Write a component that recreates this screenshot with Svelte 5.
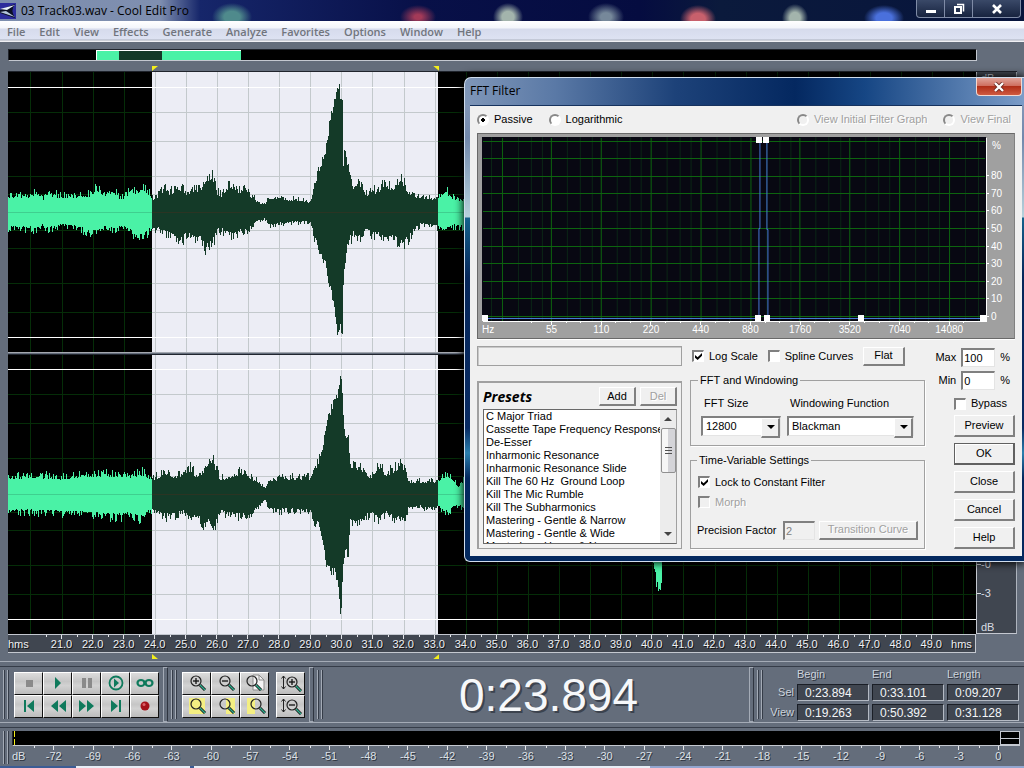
<script lang="ts">
	const menus = ['File', 'Edit', 'View', 'Effects', 'Generate', 'Analyze', 'Favorites', 'Options', 'Window', 'Help'];

	// Visible range and selection, in seconds
	const view = { begin: 19.263, end: 50.392 };
	const sel = { begin: 23.894, end: 33.101 };
	const W = 968;
	const H = 562;

	const toX = (t: number) => ((t - view.begin) / (view.end - view.begin)) * W;
	const pct = (t: number) => (toX(t) / W) * 100;
	const selX = Math.round(toX(sel.begin));
	const selEnd = Math.round(toX(sel.end));

	const seconds = Array.from({ length: 31 }, (_, i) => 20 + i);
	const timeLabels = Array.from({ length: 29 }, (_, i) => (21 + i).toFixed(1));
	const levels = [18, 36, 71, 100];
	const dbLabels = Array.from({ length: 25 }, (_, i) => String(-72 + i * 3));

	// Envelope key points: x, peak above the centre, peak below it
	const left = [
		[0, 17, 15], [22, 17, 16], [28, 20, 17], [34, 13, 13], [38, 20, 17], [52, 16, 13], [67, 16, 14],
		[82, 18, 20], [89, 24, 20], [97, 17, 15], [104, 22, 17], [112, 15, 15], [118, 17, 16], [123, 26, 20],
		[127, 20, 26], [135, 26, 25], [142, 18, 17], [146, 13, 15], [155, 24, 20], [162, 20, 22], [170, 26, 30],
		[178, 20, 22], [187, 25, 28], [192, 22, 25], [197, 34, 35], [204, 36, 30], [209, 20, 18], [214, 16, 18],
		[218, 26, 21], [224, 27, 23], [230, 22, 20], [239, 22, 18], [244, 15, 13], [250, 10, 8], [256, 8, 6],
		[262, 15, 13], [272, 15, 11], [282, 13, 10], [292, 13, 10], [302, 10, 10], [304, 20, 18], [310, 40, 38],
		[317, 62, 52], [322, 92, 74], [326, 112, 98], [329, 126, 122], [331, 126, 120], [332, 115, 112],
		[334, 115, 122], [335, 50, 70], [337, 65, 50], [340, 42, 28], [345, 25, 22], [349, 30, 28], [353, 28, 22],
		[358, 18, 18], [364, 20, 22], [372, 25, 22], [376, 30, 28], [384, 24, 24], [392, 33, 31], [396, 28, 31],
		[402, 18, 22], [412, 15, 12], [422, 14, 13], [430, 16, 15], [435, 16, 19], [438, 21, 16], [444, 15, 13],
		[456, 12, 15], [968, 12, 12]
	];
	const right = [
		[0, 17, 17], [22, 19, 17], [52, 17, 18], [82, 20, 20], [112, 20, 22], [122, 18, 20], [132, 22, 24],
		[142, 18, 16], [145, 16, 17], [157, 23, 22], [167, 18, 20], [175, 22, 18], [182, 26, 25], [189, 18, 22],
		[196, 25, 30], [200, 34, 28], [205, 36, 38], [208, 24, 26], [212, 16, 18], [222, 18, 20], [230, 22, 22],
		[242, 18, 20], [248, 14, 14], [254, 8, 8], [257, 7, 5], [260, 14, 15], [272, 17, 16], [287, 17, 15],
		[302, 17, 16], [305, 27, 27], [310, 31, 31], [314, 48, 48], [319, 70, 72], [323, 87, 78], [326, 88, 74],
		[330, 104, 94], [332, 118, 120], [333, 113, 114], [334, 105, 88], [336, 60, 57], [340, 56, 56],
		[342, 30, 28], [349, 28, 30], [355, 25, 25], [362, 18, 18], [370, 29, 26], [378, 21, 19], [386, 25, 24],
		[392, 29, 25], [397, 24, 28], [400, 13, 14], [412, 13, 12], [424, 13, 15], [430, 14, 12], [435, 18, 15],
		[439, 21, 19], [444, 16, 14], [450, 8, 10], [456, 15, 15], [640, 12, 12], [645, 40, 72], [648, 60, 86],
		[651, 60, 98], [653, 50, 92], [654, 12, 12], [968, 12, 12]
	];

	// Small repeatable noise, so that a redraw gives the same shape
	function noise(n: number) {
		const s = Math.sin(n * 127.1 + 11.7) * 43758.5453;
		return s - Math.floor(s);
	}

	function peak(points: number[][], x: number, side: number) {
		let i = 1;
		while (i < points.length - 1 && points[i][0] <= x) i++;
		const a = points[i - 1];
		const b = points[i];
		const v = a[side] + ((b[side] - a[side]) * (x - a[0])) / (b[0] - a[0]);
		const n = noise(x * 2.3 + side * 91 + points.length);
		const spread = Math.min(v * 0.24, 6);
		return Math.round(v - spread / 1.5 + n * n * spread * 1.8);
	}

	function wave(points: number[][], mid: number, from: number, to: number) {
		let top = `M${from} ${mid}`;
		let bottom = '';
		for (let x = from; x < to; x++) top += `V${mid - peak(points, x, 1)}h1`;
		for (let x = to - 1; x >= from; x--) bottom += `V${mid + 1 + peak(points, x, 2)}h-1`;
		return top + bottom + 'Z';
	}

	const channels = [
		{ mid: 140, points: left },
		{ mid: 422, points: right }
	];

	// Filter graph
	const freqs = ['55', '110', '220', '440', '880', '1760', '3520', '7040', '14080'];
	const octaves = Array.from({ length: 10 }, (_, i) => 20 + i * 49.8);
	const minors = octaves.flatMap((o) => [1.25, 1.5, 1.75].map((r) => o + 49.8 * Math.log2(r))).filter((x) => x < 505);
	const rows = Array.from({ length: 11 }, (_, i) => 4 + i * 17.5);
	const percents = [80, 70, 60, 50, 40, 30, 20, 10, 0];
	const nodes = [[3, 181], [277, 181], [286, 181], [380, 181], [502, 181], [278, 3], [285, 3]];

	const presets = [
		'C Major Triad',
		'Cassette Tape Frequency Response',
		'De-Esser',
		'Inharmonic Resonance',
		'Inharmonic Resonance Slide',
		'Kill The 60 Hz\u00a0 Ground Loop',
		'Kill The Mic Rumble',
		'Kill The Subharmonics',
		'Mastering - Gentle & Narrow',
		'Mastering - Gentle & Wide',
		'Mastering - Heavy & Narrow'
	];

	const transport = ['stop', 'play', 'pause', 'play-loop', 'loop', 'start', 'rewind', 'forward', 'end', 'record'];
	const zooms = ['in', 'out', 'full', 'selection', 'right-edge', 'left-edge'];

	const times = [
		{ name: 'Sel', values: ['0:23.894', '0:33.101', '0:09.207'] },
		{ name: 'View', values: ['0:19.263', '0:50.392', '0:31.128'] }
	];

	const snap = (v: number) => Math.floor(v) + 0.5;

	let mode = $state('passive');
	let logScale = $state(true);
	let spline = $state(false);
	let lock = $state(true);
	let bypass = $state(false);
</script>

{#snippet lens(cx: number, cy: number, sign: string)}
	<path d="M{cx + 4} {cy + 4}l5 5" stroke="#111" stroke-width="3" />
	<path d="M{cx + 4} {cy + 4}l5 5" stroke="#2fae8e" stroke-width="1.4" />
	<circle {cx} {cy} r="5" fill="none" stroke="#222" stroke-width="1.2" />
	{#if sign}<path d="M{cx - 3} {cy}h6" stroke="#111" stroke-width="1.3" />{/if}
	{#if sign === '+'}<path d="M{cx} {cy - 3}v6" stroke="#111" stroke-width="1.3" />{/if}
{/snippet}

<div class="app">
	<header class="titlebar">
		<svg class="logo" width="16" height="16" viewBox="0 0 16 16" aria-hidden="true">
			<path d="M0 0h16v16H0z" fill="#2c2c9c" />
			<path d="M0 7L15 1Q10 7 15 15L0 10z" fill="#0c1024" />
			<path d="M0 6L15 2L7 7z" fill="#e8f2fa" />
			<path d="M0 9L6 8L15 14z" fill="#b4c6dc" />
		</svg>
		<span class="title">03 Track03.wav - Cool Edit Pro</span>
		<div class="win-buttons">
			<button aria-label="Minimize"><svg width="12" height="12" viewBox="0 0 12 12"><path d="M1 7h10v3H1z" fill="#fff" /></svg></button>
			<button aria-label="Restore"><svg width="12" height="12" viewBox="0 0 12 12" fill="none" stroke="#fff"><path d="M4 1.5h6.500v7" stroke-width="1.500" /><path d="M2 4h6v6H2z" stroke-width="2" /></svg></button>
			<button aria-label="Close"><svg width="12" height="12" viewBox="0 0 12 12"><path d="M2 2l8 8M10 2l-8 8" stroke="#fff" stroke-width="2.600" /></svg></button>
		</div>
	</header>

	<nav class="menubar">
		{#each menus as m}
			<button>{m}</button>
		{/each}
	</nav>

	<main class="editor">
		<div class="overview">
			<div class="range"><div class="picked"></div></div>
		</div>
		<div class="markers top">
			<i class="begin" style:left="{pct(sel.begin)}%"></i>
			<i class="end" style:left="{pct(sel.end)}%"></i>
		</div>
		<div class="tracks">
			<svg class="wave" viewBox="0 0 {W} {H}" preserveAspectRatio="none" shape-rendering="crispEdges">
				<rect width={W} height={H} fill="#000" />
				<rect x={selX} width={selEnd - selX} height={H} fill="#ecedf5" />
				{#each seconds as s}
					{@const x = snap(toX(s))}
					<path d="M{x} 0V{H}" stroke={x > selX && x < selEnd ? '#c3c9cc' : '#052d08'} />
				{/each}
				{#each channels as ch}
					{#each levels as l}
						{#each [ch.mid - l, ch.mid + l] as y}
							<path d="M0 {y + 0.5}H{W}" stroke="#052d08" />
							<path d="M{selX} {y + 0.5}H{selEnd}" stroke="#c3c9cc" />
						{/each}
					{/each}
					<path d="M0 {ch.mid - 124.5}H{W}M0 {ch.mid + 125.5}H{W}" stroke="#fff" />
					<path d={wave(ch.points, ch.mid, 0, selX)} fill="#4af2a6" />
					<path d={wave(ch.points, ch.mid, selX, selEnd)} fill="#143a28" />
					<path d={wave(ch.points, ch.mid, selEnd, W)} fill="#4af2a6" />
					<path d="M0 {ch.mid + 0.5}H{W}" stroke="#3fcf8f" />
					<path d="M{selX} {ch.mid + 0.5}H{selEnd}" stroke="#2b3423" />
				{/each}
				<path d="M0 280.500H{W}" stroke="#a4a8b0" />
				<path d="M0 281.500H{W}" stroke="#646d7b" />
				<path d="M0 282.500H{W}" stroke="#20252e" />
			</svg>
			<div class="db-scale">
				<span>dB</span>
				<span class="tick push">-0</span>
				<span class="tick">-3</span>
				<span class="last">dB</span>
			</div>
		</div>
		<div class="ruler">
			<span class="unit">hms</span>
			{#each timeLabels as t}
				<span class="cell">{t}</span>
			{/each}
			<span class="unit right">hms</span>
		</div>
		<div class="markers bottom">
			<i class="begin" style:left="{pct(sel.begin)}%"></i>
			<i class="end" style:left="{pct(sel.end)}%"></i>
		</div>
	</main>

	<section class="toolbar">
		<div class="grip"></div>
		<div class="keys five">
			{#each transport as name}
				<button aria-label={name}>
					<svg width="20" height="16" viewBox="0 0 20 16">
						{#if name === 'stop'}
							<path d="M7 5h7v7H7z" fill="#8a8a8a" />
						{:else if name === 'play'}
							<path d="M7 2v12l6-6z" fill="#0f7a5c" />
						{:else if name === 'pause'}
							<path d="M5 3h4v10H5zM11 3h4v10h-4z" fill="#8a8a8a" />
						{:else if name === 'play-loop'}
							<circle cx="10" cy="8" r="6.500" fill="none" stroke="#0f7a5c" stroke-width="1.800" />
							<path d="M8 3.500v9l5-4.500z" fill="#0f7a5c" />
						{:else if name === 'loop'}
							<ellipse cx="6" cy="8" rx="3.500" ry="3" fill="none" stroke="#0f7a5c" stroke-width="2.200" />
							<ellipse cx="14" cy="8" rx="3.500" ry="3" fill="none" stroke="#0f7a5c" stroke-width="2.200" />
							<path d="M8.500 6l3 4" stroke="#0f7a5c" stroke-width="2" />
						{:else if name === 'start'}
							<path d="M5 2h2v12H5zM15 2v12L8 8z" fill="#0f7a5c" />
						{:else if name === 'rewind'}
							<path d="M10 2v12L3 8zM18 2v12l-7-6z" fill="#0f7a5c" />
						{:else if name === 'forward'}
							<path d="M2 2v12l7-6zM10 2v12l7-6z" fill="#0f7a5c" />
						{:else if name === 'end'}
							<path d="M5 2v12l7-6zM13 2h2v12h-2z" fill="#0f7a5c" />
						{:else}
							<circle cx="10" cy="8" r="4.500" fill="#a5121a" />
							<circle cx="9" cy="6.500" r="1.500" fill="#d9626a" />
						{/if}
					</svg>
				</button>
			{/each}
		</div>
		<div class="stop"></div>
		<div class="grip"></div>
		<div class="keys three">
			{#each zooms as z}
				<button aria-label="Zoom {z}">
					<svg width="22" height="18" viewBox="0 0 22 18">
						{#if z === 'full'}
							<path d="M9 1h6l5 5v10H9z" fill="#f4f4f4" stroke="#8c8c8c" />
							<path d="M15 1v5h5" fill="none" stroke="#8c8c8c" />
						{:else if z === 'selection'}
							<path d="M3 1h16v16H3z" fill="#f4ef82" />
						{:else if z === 'right-edge'}
							<path d="M11 1h9v16h-9z" fill="#f4ef82" />
						{:else if z === 'left-edge'}
							<path d="M3 1h8v16H3z" fill="#f4ef82" />
						{/if}
						{@render lens(z === 'full' ? 8 : z === 'left-edge' ? 12 : 10, 7, z === 'in' ? '+' : z === 'out' ? '-' : '')}
					</svg>
				</button>
			{/each}
		</div>
		<div class="keys one">
			{#each ['+', '-'] as sign}
				<button aria-label="Vertical zoom {sign}">
					<svg width="22" height="18" viewBox="0 0 22 18">
						<path d="M3.500 2v13M1.500 4.500l2-2.500 2 2.500M1.500 12.500l2 2.500 2-2.500" fill="none" stroke="#222" />
						{@render lens(12, 8, sign)}
					</svg>
				</button>
			{/each}
		</div>
		<div class="stop"></div>
		<div class="grip"></div>
		<div class="clock">0:23.894</div>
		<div class="stop"></div>
		<div class="grip"></div>
		<div class="times">
			<span></span><span class="head">Begin</span><span class="head">End</span><span class="head">Length</span>
			{#each times as row}
				<span class="name">{row.name}</span>
				{#each row.values as v, i}
					<input value={v} aria-label="{row.name} {['begin', 'end', 'length'][i]}" />
				{/each}
			{/each}
		</div>
	</section>

	<section class="meter">
		<div class="grip"></div>
		<div class="meter-body">
			<div class="bar"><i class="level"></i><i class="clip"></i></div>
			<div class="meter-scale">
				<span class="unit">dB</span>
				{#each dbLabels as d}
					<span class="cell">{d}</span>
				{/each}
			</div>
		</div>
	</section>
	<div class="taskbar"></div>

	<div class="dialog" role="dialog" aria-label="FFT Filter">
		<div class="dialog-title">
			<span>FFT Filter</span>
			<button aria-label="Close dialog"><svg width="12" height="10" viewBox="0 0 12 10"><path d="M2 1l8 8M10 1L2 9" stroke="#6d2a22" stroke-width="4" /><path d="M2 1l8 8M10 1L2 9" stroke="#fff" stroke-width="2.400" /></svg></button>
		</div>
		<div class="client">
			<div class="modes">
				<label><input type="radio" value="passive" bind:group={mode} />Passive</label>
				<label><input type="radio" value="log" bind:group={mode} />Logarithmic</label>
				<label class="off first-off"><input type="radio" disabled />View Initial Filter Graph</label>
				<label class="off"><input type="radio" disabled />View Final</label>
			</div>

			<div class="graph">
				<div class="plot-col">
					<svg class="plot" viewBox="0 0 505 184" preserveAspectRatio="none" shape-rendering="crispEdges">
						<rect width="505" height="184" fill="#080812" />
						<path d="M9.500 0V184" stroke="#0b2616" />
						{#each minors as x}
							<path d="M{snap(x)} 0V184" stroke="#0b2616" />
						{/each}
						{#each octaves as x}
							<path d="M{snap(x)} 1V184" stroke="#0d640f" />
						{/each}
						{#each rows as y}
							<path d="M1 {snap(y)}H504" stroke="#0d640f" />
						{/each}
						<path d="M3 181.500H277.500V91.500H278.500V3M285.500 3V92.500H286.500V181.500H502" fill="none" stroke="#4878d8" />
						{#each nodes as [x, y]}
							<rect x={x - 3} y={y - 3} width="6" height="6" fill="#fff" />
						{/each}
					</svg>
					<div class="freqs">
						<span class="hz">Hz</span>
						{#each freqs as f}
							<span class="freq">{f}</span>
						{/each}
						<span class="tail"></span>
					</div>
				</div>
				<div class="percents">
					<span class="sign">%</span>
					{#each percents as p}
						<span class="mark">{p}</span>
					{/each}
				</div>
			</div>

			<div class="body">
				<div class="col-left">
					<div class="status"></div>
					<div class="presets">
						<div class="presets-head">
							<label for="presets">Presets</label>
							<button class="btn">Add</button>
							<button class="btn" disabled>Del</button>
						</div>
						<div class="listbox">
							<select id="presets" size="11">
								{#each presets as p}
									<option>{p}</option>
								{/each}
							</select>
							<div class="scroll">
								<i class="up"></i>
								<div class="thumb"><b></b></div>
								<i class="down"></i>
							</div>
						</div>
					</div>
				</div>

				<div class="col-mid">
					<div class="checks">
						<label><input type="checkbox" bind:checked={logScale} />Log Scale</label>
						<label><input type="checkbox" bind:checked={spline} />Spline Curves</label>
						<button class="btn">Flat</button>
					</div>
					<fieldset>
						<legend>FFT and Windowing</legend>
						<div class="pair">
							<div class="field size">
								<label for="fft-size">FFT Size</label>
								<div class="combo"><select id="fft-size"><option>12800</option></select></div>
							</div>
							<div class="field func">
								<label for="window-fn">Windowing Function</label>
								<div class="combo"><select id="window-fn"><option>Blackman</option></select></div>
							</div>
						</div>
					</fieldset>
					<fieldset class="tall">
						<legend>Time-Variable Settings</legend>
						<label class="line"><input type="checkbox" bind:checked={lock} />Lock to Constant Filter</label>
						<label class="line off"><input type="checkbox" disabled />Morph</label>
						<div class="precision">
							<label for="precision">Precision Factor</label>
							<input id="precision" class="text" value="2" disabled />
							<button class="btn" disabled>Transition Curve</button>
						</div>
					</fieldset>
				</div>

				<div class="col-right">
					<label class="limit">Max <input class="text" value="100" /> %</label>
					<label class="limit">Min <input class="text" value="0" /> %</label>
					<label class="bypass"><input type="checkbox" bind:checked={bypass} />Bypass</label>
					<div class="actions">
						<button class="btn">Preview</button>
						<button class="btn default">OK</button>
						<button class="btn">Close</button>
						<button class="btn">Cancel</button>
						<button class="btn">Help</button>
					</div>
				</div>
			</div>
		</div>
	</div>
</div>

<style>
	:global(body) {
		background: #646d7b;
	}
	.app {
		position: relative;
		display: flex;
		flex-direction: column;
		min-height: 100vh;
		overflow: hidden;
		background: #646d7b;
		font-family: 'Liberation Sans', Arial, sans-serif;
		font-size: 11px;
		color: #000;
	}
	.app * {
		box-sizing: border-box;
	}
	button,
	input,
	select {
		font: inherit;
		color: inherit;
		margin: 0;
		padding: 0;
		border: 0;
		border-radius: 0;
		background: none;
		outline: none;
	}

	/* Title bar and menu */
	.titlebar {
		display: flex;
		align-items: center;
		height: 21px;
		gap: 5px;
		background:
			radial-gradient(ellipse 20px 14px at 232px 17px, #4f8a8c 40%, transparent),
			radial-gradient(ellipse 18px 12px at 418px 17px, #a33a58 20%, transparent),
			radial-gradient(ellipse 15px 14px at 508px 17px, #a3b4ac 40%, transparent),
			radial-gradient(ellipse 18px 14px at 606px 17px, #76889a 30%, transparent),
			radial-gradient(ellipse 18px 14px at 698px 19px, #c8606c 40%, transparent),
			radial-gradient(ellipse 13px 14px at 795px 18px, #a3b4ac 40%, transparent),
			radial-gradient(ellipse 20px 13px at 884px 18px, #4a70dc 40%, transparent),
			linear-gradient(90deg, #7c8dad 0, #7f8fb0 160px, #16266a 200px, #081048 420px, #050c40 640px, #0b1a3c 720px, #07143c);
	}
	.title {
		flex: 1;
		font-family: 'Open Sans', 'Noto Sans', sans-serif;
		font-size: 12px;
	}
	.win-buttons {
		display: flex;
		align-self: flex-start;
		height: 18px;
		margin-right: 3px;
		border: 1px solid #7f8ba6;
		border-top: 0;
		border-radius: 0 0 4px 4px;
		background: linear-gradient(#3a4968, #17233f);
	}
	.win-buttons button {
		display: flex;
		align-items: center;
		justify-content: center;
		width: 28px;
		border-right: 1px solid #7f8ba6;
	}
	.win-buttons button:last-child {
		width: 47px;
		border-right: 0;
	}
	.menubar {
		display: flex;
		height: 21px;
		background: linear-gradient(#fff 0, #f3f5fb 7px, #d6dbec 8px, #dde2f2 18px, #aab0bd 19px, #f0f0f4 20px);
		font-family: 'Open Sans', 'Noto Sans', sans-serif;
		font-size: 11px;
		font-weight: 600;
		color: #71757d;
	}
	.menubar button {
		padding: 0 7px;
	}

	/* Waveform display */
	.editor {
		display: flex;
		flex: 1;
		flex-direction: column;
		padding: 7px 7px 0 8px;
	}
	.overview {
		height: 12px;
		margin-right: 40px;
		background: #000;
		border: 1px solid #20242c;
		border-right-color: #c4c8d0;
		border-bottom-color: #c4c8d0;
	}
	.range {
		width: 15%;
		height: 100%;
		margin-left: 9%;
		background: #4af2a6;
		border-left: 1px solid #fff;
		border-top: 1px solid #fff;
	}
	.picked {
		width: 30%;
		height: 100%;
		margin-left: 15%;
		background: #143a28;
	}
	.markers {
		position: relative;
		height: 10px;
		margin-right: 41px;
	}
	.markers i {
		position: absolute;
		width: 6px;
		height: 5px;
		background: #f4ee1c;
	}
	.markers.top i {
		bottom: 0;
	}
	.markers.bottom {
		height: 8px;
	}
	.markers.bottom i {
		top: 1px;
	}
	.markers .end {
		margin-left: -5px;
	}
	.top .begin {
		clip-path: polygon(0 0, 100% 0, 0 100%);
	}
	.top .end {
		clip-path: polygon(0 0, 100% 0, 100% 100%);
	}
	.bottom .begin {
		clip-path: polygon(0 0, 100% 100%, 0 100%);
	}
	.bottom .end {
		clip-path: polygon(100% 0, 100% 100%, 0 100%);
	}
	.tracks {
		display: flex;
		flex: 1;
		border-top: 1px solid #20242c;
	}
	.wave {
		flex: 1;
		width: 100%;
		min-width: 0;
		height: 562px;
	}
	.db-scale {
		display: flex;
		flex-direction: column;
		width: 41px;
		background: #404650;
		border-left: 1px solid #c4c8d0;
		border-right: 1px solid #aeb4be;
		border-bottom: 1px solid #c4c8d0;
		color: #d8dce2;
		line-height: 12px;
	}
	.db-scale span {
		padding-left: 4px;
	}
	.db-scale .push {
		margin-top: auto;
	}
	.db-scale .tick {
		position: relative;
		height: 29px;
	}
	.db-scale .tick::before {
		content: '';
		position: absolute;
		left: 0;
		top: 6px;
		width: 4px;
		height: 1px;
		background: #d8dce2;
	}
	.db-scale .last {
		margin: 5px 0 0;
	}
	.ruler {
		display: flex;
		height: 19px;
		margin-right: 41px;
		border-top: 1px solid #c4c8d0;
		border-bottom: 1px solid #c4c8d0;
		border-right: 1px solid #c4c8d0;
		background: #404650;
		color: #eef0f4;
		line-height: 18px;
		text-shadow: 1px 1px 0 #111;
	}
	.ruler .unit {
		width: 38px;
	}
	.ruler .right {
		width: 28px;
		padding-right: 3px;
		text-align: right;
	}
	.cell {
		flex: 1;
		min-width: 0;
		text-align: center;
		background:
			linear-gradient(#e4e6ea, #e4e6ea) 50% 0 / 1px 4px no-repeat,
			linear-gradient(#e4e6ea, #e4e6ea) 0 0 / 1px 2px no-repeat;
	}

	/* Toolbars */
	.toolbar {
		display: flex;
		align-items: center;
		height: 61px;
		padding: 5px 0 0 3px;
		border-top: 1px solid #a4abb6;
		box-shadow: inset 0 4px 0 #646d7b, inset 0 5px 0 #353c48;
	}
	.grip {
		flex: none;
		align-self: stretch;
		width: 5px;
		margin: 3px 6px 3px 0;
		border-left: 1px solid #a4abb6;
		border-right: 1px solid #a4abb6;
		box-shadow: 1px 0 0 #353c48, inset 1px 0 0 #353c48;
	}
	.stop {
		flex: none;
		align-self: stretch;
		width: 5px;
		margin-right: 3px;
		border: 1px solid #a4abb6;
		border-right-color: #2f3540;
	}
	.keys {
		display: grid;
		flex: none;
		grid-auto-rows: 23px;
		margin-right: 4px;
	}
	.five {
		grid-template-columns: repeat(5, 29px);
	}
	.three {
		grid-template-columns: repeat(3, 29px);
		margin-right: 7px;
	}
	.one {
		grid-template-columns: 29px;
	}
	.keys button {
		display: flex;
		align-items: center;
		justify-content: center;
		background: linear-gradient(#dcdcdc, #c6c6c6 40%, #d2d2d2 60%, #bcbcbc);
		border: 1px solid #fff;
		border-right-color: #111;
		border-bottom-color: #111;
	}
	.clock {
		flex: 1;
		padding-left: 20px;
		text-align: center;
		font-size: 46px;
		line-height: 52px;
		color: #f6f8fa;
		text-shadow: 2px 2px 0 #3c434e;
	}
	.times {
		display: grid;
		flex: none;
		grid-template-columns: 26px repeat(3, 72px);
		grid-template-rows: 13px 17px 17px;
		gap: 3px;
		margin-right: 5px;
		color: #ccd3dc;
		text-shadow: 1px 1px 0 #2f3540;
	}
	.name {
		text-align: right;
		line-height: 17px;
	}
	.times input {
		width: 72px;
		padding-left: 7px;
		background: #404650;
		border: 1px solid #1a1e26;
		border-right-color: #b4bac4;
		border-bottom-color: #b4bac4;
		color: #f4f6f8;
		font-size: 12px;
	}
	.meter {
		display: flex;
		height: 44px;
		padding: 8px 4px 0 3px;
		border-top: 1px solid #a4abb6;
		box-shadow: inset 0 4px 0 #646d7b, inset 0 5px 0 #353c48;
	}
	.meter .grip {
		margin: 0 4px 2px 0;
	}
	.meter-body {
		flex: 1;
	}
	.bar {
		display: flex;
		justify-content: space-between;
		height: 15px;
		background: #000;
		border-left: 1px solid #20242c;
		border-bottom: 1px solid #c4c8d0;
	}
	.level {
		width: 1px;
		margin-left: 1px;
		background: repeating-linear-gradient(#f4ee1c 0 6px, #000 6px 8px);
	}
	.clip {
		width: 20px;
		border: 1px solid #c4c8d0;
		background: linear-gradient(#c4c8d0, #c4c8d0) 0 50% / 100% 1px no-repeat;
	}
	.meter-scale {
		display: flex;
		padding-right: 2px;
		color: #dde1e7;
		line-height: 20px;
		text-shadow: 1px 1px 0 #2f3540;
	}
	.meter-scale .unit {
		width: 22px;
	}
	.taskbar {
		height: 2px;
		background: linear-gradient(90deg, #3c5c94 0 76px, #e8eef6 76px 190px, #3c5c94 190px 194px, #e8eef6 194px 650px, #93a6cf 650px);
	}

	/* Dialog window */
	.dialog {
		position: absolute;
		top: 77px;
		left: 464px;
		right: 0;
		padding: 0 2px 5px 5px;
		border: 1px solid #cfdcec;
		border-right: 0;
		border-radius: 7px 0 0 6px;
		background:
			linear-gradient(90deg, #7f96b8 0, #5a79a6 90px, #1d4279 210px, #042860 330px, #164684 400px, #7b9cc8) 0 0 / 100% 27px no-repeat,
			linear-gradient(#8fa2c0 0, #7288ac 60px, #b6d2dc 139px, #14618c 140px, #05265a 200px, #082a62 350px, #2a7fae 375px, #03285e 400px);
		box-shadow: 0 0 8px 1px #000;
	}
	.dialog-title {
		display: flex;
		height: 27px;
		font-family: 'Open Sans', 'Noto Sans', sans-serif;
		font-size: 12px;
		line-height: 26px;
	}
	.dialog-title span {
		flex: 1;
	}
	.dialog-title button {
		display: flex;
		align-items: center;
		justify-content: center;
		width: 46px;
		height: 18px;
		border: 1px solid #f4d8d0;
		border-top: 0;
		border-radius: 0 0 4px 4px;
		background: linear-gradient(#e0a49a, #cf6f60 45%, #b02e18 50%, #cf5a40);
	}
	.client {
		padding: 0 7px 7px;
		background: #f0f0f0;
		border-top: 1px solid #16325e;
		line-height: 13px;
	}
	.modes {
		display: flex;
		align-items: center;
		height: 27px;
	}
	label {
		display: flex;
		align-items: center;
		gap: 5px;
	}
	.modes label {
		margin-right: 16px;
	}
	.modes .first-off {
		margin-left: auto;
	}
	.modes label:last-child {
		margin-right: 4px;
	}
	.off {
		color: #a0a0a0;
		text-shadow: 1px 1px 0 #fff;
	}
	input[type='radio'] {
		appearance: none;
		width: 12px;
		height: 12px;
		border: 2px solid #888;
		border-right-color: #fff;
		border-bottom-color: #fff;
		border-radius: 50%;
		background: #fff;
	}
	input[type='radio']:disabled {
		background: #f0f0f0;
	}
	input[type='radio']:checked {
		background: radial-gradient(circle, #000 0 2px, #fff 2px);
	}
	input[type='checkbox'] {
		appearance: none;
		flex: none;
		width: 12px;
		height: 12px;
		border: 1px solid #fff;
		border-top: 2px solid #808080;
		border-left: 2px solid #808080;
		background: #fff;
	}
	input[type='checkbox']:disabled {
		background: #f0f0f0;
	}
	input[type='checkbox']:checked::before {
		content: '';
		display: block;
		width: 7px;
		height: 7px;
		margin: 1px;
		background: #000;
		clip-path: polygon(0 28%, 38% 62%, 100% 0, 100% 40%, 38% 100%, 0 68%);
	}
	.graph {
		display: flex;
		height: 206px;
		padding: 3px 2px 0 4px;
		background: #a0a0a0;
		border: 1px solid #696969;
		border-right-color: #808080;
		box-shadow: 0 1px 0 #fff;
		color: #fff;
	}
	.plot-col {
		flex: 1;
		min-width: 0;
	}
	.plot {
		display: block;
		width: 100%;
		height: 184px;
		box-shadow: 1px 1px 0 #fff;
	}
	.freqs {
		display: flex;
		padding-top: 1px;
		font-size: 10px;
		line-height: 15px;
	}
	.hz {
		flex: 45 1 0;
	}
	.freq {
		flex: 50 1 0;
		min-width: 0;
		text-align: center;
		background:
			linear-gradient(#fff, #fff) 50% 0 / 1px 3px no-repeat,
			linear-gradient(#fff, #fff) 80% 0 / 1px 1px no-repeat,
			linear-gradient(#fff, #fff) 8% 0 / 1px 1px no-repeat;
	}
	.tail {
		flex: 12 1 0;
	}
	.percents {
		display: flex;
		flex-direction: column;
		width: 26px;
		padding: 0 0 13px 1px;
		font-size: 10px;
	}
	.sign {
		height: 30px;
		padding: 2px 0 0 5px;
	}
	.mark {
		display: flex;
		flex: 1;
		align-items: center;
		gap: 2px;
	}
	.mark::before {
		content: '';
		width: 2px;
		height: 1px;
		background: #fff;
	}
	.body {
		display: flex;
		gap: 8px;
		margin-top: 7px;
	}
	.col-left {
		display: flex;
		flex-direction: column;
		gap: 15px;
		width: 205px;
	}
	.status {
		height: 20px;
		border: 1px solid #a0a0a0;
		box-shadow: inset 1px 1px 0 #c8c8c8;
	}
	.presets {
		flex: 1;
		padding: 4px;
		border: 2px solid #a0a0a0;
		border-right-width: 1px;
		border-bottom-width: 1px;
	}
	.presets-head {
		display: flex;
		gap: 4px;
		height: 19px;
	}
	.presets-head label {
		flex: 1;
		font-family: 'Open Sans', 'Noto Sans', sans-serif;
		font-size: 14px;
		font-weight: bold;
		font-style: italic;
	}
	.presets-head .btn {
		width: 37px;
	}
	.btn {
		display: flex;
		align-items: center;
		justify-content: center;
		height: 19px;
		border: 1px solid #fff;
		border-right: 2px solid #808080;
		border-bottom: 2px solid #808080;
		background: #f0f0f0;
	}
	.btn:disabled {
		color: #a0a0a0;
		text-shadow: 1px 1px 0 #fff;
	}
	.listbox {
		display: flex;
		height: 135px;
		margin-top: 3px;
		background: #fff;
		border: 1px solid #696969;
		border-right-color: #a0a0a0;
	}
	.listbox select {
		flex: 1;
		min-width: 0;
		height: 133px;
		overflow: hidden;
		scrollbar-width: none;
		appearance: none;
	}
	.listbox option {
		min-height: 13px;
		padding: 0 0 0 2px;
		line-height: 13px;
		white-space: pre;
	}
	.scroll {
		display: flex;
		flex: none;
		flex-direction: column;
		align-items: center;
		width: 16px;
		background: #ececec;
	}
	.scroll i {
		border: 4px solid transparent;
	}
	.scroll .up {
		margin: 7px 0;
		border-bottom-color: #444;
		border-top-width: 0;
	}
	.scroll .down {
		margin: auto 0 7px;
		border-top-color: #444;
		border-bottom-width: 0;
	}
	.thumb {
		display: flex;
		align-items: center;
		justify-content: center;
		width: 15px;
		height: 45px;
		border: 1px solid #909090;
		border-radius: 2px;
		background: linear-gradient(90deg, #f6f6f6 50%, #d4d4d8 50%);
	}
	.thumb b {
		width: 7px;
		height: 7px;
		background: repeating-linear-gradient(#505050 0 1px, transparent 1px 3px);
	}
	.col-mid {
		display: flex;
		flex-direction: column;
		gap: 8px;
		width: 235px;
	}
	.checks {
		display: flex;
		align-items: center;
		justify-content: space-between;
		height: 20px;
		padding: 0 20px 0 2px;
	}
	.checks .btn {
		width: 42px;
	}
	fieldset {
		min-width: 0;
		height: 72px;
		margin: 0;
		padding: 10px 6px 0 7px;
		border: 1px solid #a0a0a0;
		box-shadow: 1px 1px 0 #fff;
	}
	.tall {
		height: 95px;
		padding: 5px 6px 0;
	}
	legend {
		padding: 0 2px;
	}
	.tall .line {
		height: 20px;
		padding-left: 1px;
	}
	.pair {
		display: flex;
		gap: 3px;
	}
	.field {
		margin-left: 3px;
	}
	.field label {
		padding-left: 3px;
	}
	.size,
	.func {
		display: flex;
		flex-direction: column;
		gap: 6px;
		width: 80px;
	}
	.func {
		flex: 1;
		margin-right: 4px;
	}
	.combo {
		position: relative;
		height: 20px;
		background: #fff;
		border: 1px solid #e4e4e4;
		border-top: 2px solid #808080;
		border-left: 2px solid #808080;
	}
	.combo select {
		width: 100%;
		height: 100%;
		padding-left: 3px;
		appearance: none;
	}
	.combo::before {
		content: '';
		position: absolute;
		top: 0;
		right: 0;
		width: 16px;
		height: 17px;
		pointer-events: none;
		background: #f0f0f0;
		border: 1px solid #fff;
		border-right: 2px solid #808080;
		border-bottom: 2px solid #808080;
	}
	.combo::after {
		content: '';
		position: absolute;
		top: 7px;
		right: 5px;
		pointer-events: none;
		border: 4px solid transparent;
		border-top-color: #000;
		border-bottom: 0;
	}
	.text {
		width: 34px;
		height: 19px;
		padding-left: 1px;
		background: #fff;
		border: 1px solid #e4e4e4;
		border-top: 2px solid #808080;
		border-left: 2px solid #808080;
	}
	.text:disabled {
		background: #f0f0f0;
		color: #808080;
	}
	.precision {
		display: flex;
		align-items: center;
		height: 36px;
	}
	.precision label {
		flex: 1;
	}
	.precision .text {
		width: 32px;
	}
	.precision .btn {
		width: 99px;
		margin-left: 4px;
	}
	.col-right {
		display: flex;
		flex: 1;
		flex-direction: column;
		align-items: flex-end;
	}
	.limit {
		gap: 5px;
		height: 23px;
		padding-right: 5px;
	}
	.bypass {
		height: 23px;
		width: 61px;
	}
	.actions {
		display: flex;
		flex-direction: column;
		gap: 6px;
	}
	.actions .btn {
		width: 61px;
		height: 22px;
	}
	.actions .default {
		border: 1px solid #606060;
		border-right-width: 2px;
		border-bottom-width: 2px;
		box-shadow: inset 1px 1px 0 #fff;
	}
</style>
